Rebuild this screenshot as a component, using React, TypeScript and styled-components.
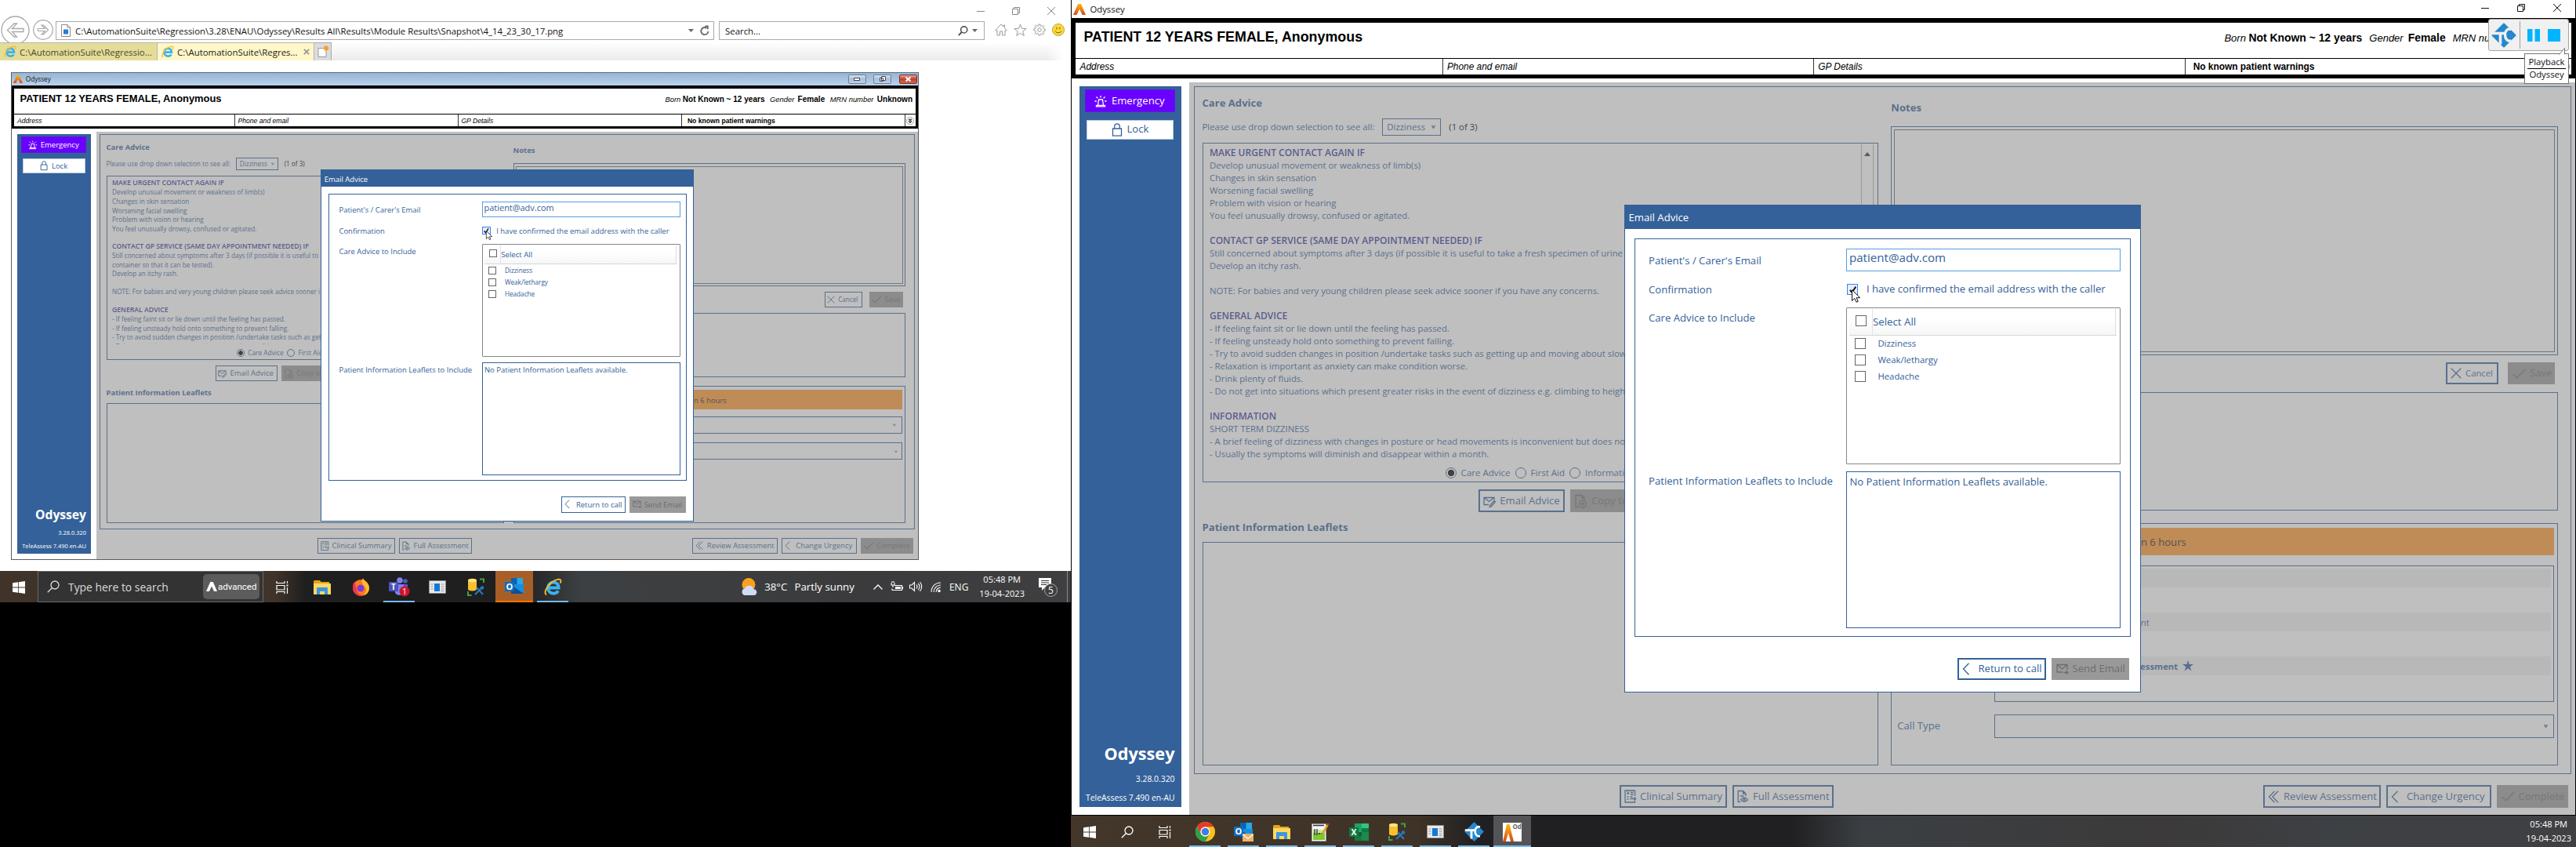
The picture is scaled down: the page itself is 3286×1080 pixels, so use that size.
import React from "react";
import styled, { createGlobalStyle, ThemeProvider, css } from "styled-components";

type Themed = { theme: any };
/* Odyssey measures are written at full size and scaled by the theme's unit. */
const u = (n: number) => ({ theme }: Themed) => `${+(n * theme.u).toFixed(3)}px`;

const BLUE = "#346199";
const SANS = `"Open Sans", "Noto Sans", sans-serif`;
const ARIAL = `"Liberation Sans", Arial, sans-serif`;

const GlobalStyle = createGlobalStyle`
  *, *::before, *::after { box-sizing: border-box; }
  body { margin: 0; background: #000; font-family: ${SANS}; overflow: hidden; }
  svg { display: block; flex: none; overflow: visible; }
`;

/* ---------- desktops ---------- */
const Desktops = styled.div`
  display: grid;
  grid-template-columns: 1366px 1920px;
  width: 3286px;
  height: 1080px;
  overflow: hidden;
  background: #000;
`;
const LeftDesktop = styled.div`
  display: grid;
  grid-template-rows: 728px 40px;
  height: 768px;
  background: #fff;
`;
const RightDesktop = styled.div`
  display: grid;
  grid-template-rows: 1040px 40px;
  position: relative;
`;

/* ---------- browser ---------- */
const Browser = styled.div`
  display: grid;
  grid-template-rows: 27px 27px 23px minmax(0, 1fr);
  min-width: 0;
`;
const CaptionBar = styled.div`
  display: flex;
  justify-content: flex-end;
  align-items: flex-start;
  gap: 35px;
  padding: 9px 20px 0 0;
  color: #888;
`;
const AddressRow = styled.div`
  display: flex;
  align-items: flex-start;
  color: #111;
  font-size: 11.4px;
`;
const NavButtons = styled.div`
  display: flex;
  align-items: center;
  gap: 4px;
  width: 71px;
  height: 34px;
  margin-top: -6px;
  padding-left: 1px;
  color: #a9a9a9;
`;
const AddressBox = styled.div`
  display: flex;
  align-items: center;
  width: 840px;
  height: 24px;
  padding: 0 5px 0 6px;
  border: 1px solid #a9a9a9;
  background: #fff;
  white-space: nowrap;
`;
const AddressText = styled.span`
  flex: 1;
  margin-left: 6px;
`;
const SearchBox = styled(AddressBox)`
  width: 339px;
  margin-left: 6px;
  padding: 0 8px 0 7px;
`;
const SearchText = styled.span`
  flex: 1;
`;
const Spacer = styled.span<{ $w: number }>`
  flex: none;
  width: ${(p) => p.$w}px;
`;
const ToolIcons = styled.div`
  display: flex;
  align-items: center;
  gap: 8px;
  height: 22px;
  margin-left: 13px;
  color: #999;
`;
const TabStrip = styled.div`
  display: flex;
  background: linear-gradient(90deg, transparent 1335px, #fff 1356px), linear-gradient(#fff, #ebebeb);
`;
const Tab = styled.div<{ $active?: boolean }>`
  display: flex;
  align-items: center;
  width: ${(p) => (p.$active ? 200 : 201)}px;
  padding: 0 5px;
  border: 1px solid #b5b5b5;
  border-width: 1px 1px 0 0;
  background: ${(p) => (p.$active ? "#fff7c8" : "#e5dc98")};
  color: ${(p) => (p.$active ? "#222" : "#4a4733")};
  font-size: 11.45px;
  white-space: nowrap;
`;
const TabText = styled.span`
  flex: 1;
  margin-left: 4px;
`;
const NewTab = styled.div`
  display: flex;
  align-items: center;
  justify-content: center;
  width: 22px;
  border: 1px solid #a9a9a9;
  border-width: 1px 1px 0 0;
  background: #dcdcdc;
`;
const PictureArea = styled.div`
  padding: 15px 0 0 14px;
`;

/* ---------- Odyssey window ---------- */
const Win = styled.div<{ $w: number; $h: number; $line: string }>`
  display: grid;
  grid-template-rows: ${u(23)} ${u(77)} minmax(0, 1fr);
  width: ${(p) => p.$w}px;
  height: ${(p) => p.$h}px;
  border: 1px solid ${(p) => p.$line};
  border-top: 0;
  background: #fff;
  color: ${BLUE};
  font-size: ${u(13.15)};
  line-height: 1.2;
  white-space: nowrap;
`;
const TitleBar = styled.div<{ $aero?: boolean }>`
  display: flex;
  align-items: center;
  gap: ${u(6)};
  padding: ${u(1.5)} ${u(18)} 0 ${u(1.5)};
  color: #111;
  font-size: ${u(11.3)};
  ${(p) =>
    p.$aero &&
    css`
      padding: 0 1px 0 1.5px;
      border-top: 1px solid #5b6f86;
      background: linear-gradient(#98b4d2, #b9d3ee);
      font-size: 8.2px;
    `}
`;
const TitleName = styled.span`
  flex: 1;
`;
const CaptionIcons = styled.div`
  display: flex;
  gap: ${u(36)};
  margin-top: -4px;
`;
const AeroButton = styled.div<{ $close?: boolean }>`
  display: flex;
  align-items: center;
  justify-content: center;
  width: 23px;
  height: 12.5px;
  margin-left: -4px;
  border: 1px solid ${(p) => (p.$close ? "#7a3030" : "#6d8199")};
  border-radius: 2px;
  background: ${(p) =>
    p.$close ? "linear-gradient(#e0a79c, #c0402a 50%, #cf6a50)" : "linear-gradient(#d3e1f0, #a9c0d8 50%, #bdd2e8)"};
`;

const Header = styled.div`
  display: grid;
  grid-template-rows: ${u(45)} minmax(0, 1fr);
  overflow: hidden;
  border: solid #000;
  border-width: ${u(6)} ${u(5)} ${u(5)} ${u(5)};
  color: #000;
  font-family: ${ARIAL};
`;
const PatientRow = styled.div`
  display: flex;
  align-items: baseline;
  padding: ${u(8)} ${u(5.5)} 0 ${u(10.5)};
`;
const PatientName = styled.div`
  flex: 1;
  font-size: ${u(17.88)};
  font-weight: bold;
`;
const Fact = styled.span<{ $gap?: number }>`
  margin-left: ${u(9)};
  font-size: ${u(13)};
  font-style: italic;
  b {
    margin-left: ${(p) => u(p.$gap ?? 6)(p as any)};
    font-size: ${u(13.92)};
    font-style: normal;
  }
`;
const DetailRow = styled.div`
  display: grid;
  grid-template-columns: repeat(4, 1fr) ${u(20)};
  margin-left: ${u(-5.5)};
  border-top: 1px solid #000;
`;
const Detail = styled.div<{ $bold?: boolean; $first?: boolean }>`
  display: flex;
  align-items: center;
  padding-left: ${(p) => u(p.$first ? 11 : p.$bold ? 10 : 5)(p as any)};
  border-left: ${(p) => (p.$first ? 0 : 1)}px solid #333;
  font-size: ${u(11.92)};
  font-weight: ${(p) => (p.$bold ? "bold" : "normal")};
  font-style: ${(p) => (p.$bold ? "normal" : "italic")};
`;
const ExpandCell = styled.div`
  display: flex;
  align-items: center;
  justify-content: center;
  border-left: 1px solid #333;
`;

const Body = styled.div`
  display: grid;
  grid-template-columns: ${u(150)} minmax(0, 1fr);
  grid-template-rows: minmax(0, 1fr);
  min-height: 0;
`;
const Sidebar = styled.div`
  display: flex;
  flex-direction: column;
  margin: ${u(10)};
  padding: ${u(4)} ${u(8.5)} ${u(0.5)} ${u(7)};
  background: ${BLUE};
  color: #fff;
`;
const SideButton = styled.div<{ $kind: "alert" | "lock" }>`
  display: flex;
  align-items: center;
  justify-content: center;
  gap: ${u(6)};
  flex: none;
  ${(p) =>
    p.$kind === "alert"
      ? css`
          height: ${u(29)};
          padding-right: ${u(1)};
          border: 1px solid #5a1cd8;
          background: #6a00ff;
          color: #fff;
        `
      : css`
          height: ${u(25.5)};
          margin: ${u(9.5)} ${u(1.5)} 0 ${u(2)};
          border: 1px solid #b9c9de;
          background: #fff;
          color: ${BLUE};
        `}
`;
const Brand = styled.div`
  display: flex;
  flex-direction: column;
  align-items: flex-end;
  margin-top: auto;
  font-size: ${u(10.36)};
  line-height: ${u(24)};
`;
const BrandName = styled.div`
  margin-bottom: ${u(3.5)};
  font-size: ${u(21.68)};
  font-weight: bold;
  line-height: ${u(32)};
`;

const Main = styled.div`
  position: relative;
  display: grid;
  grid-template-rows: minmax(0, 1fr) ${u(52)};
  margin-top: ${u(5)};
  background: #fff;
`;
const Frame = styled.div`
  display: grid;
  grid-template-columns: minmax(0, 863fr) minmax(0, 851fr);
  grid-template-rows: minmax(0, 1fr);
  column-gap: ${u(16)};
  margin: ${u(5)} ${u(5)} 0 ${u(5.5)};
  padding: 0 ${u(16)} 0 ${u(10)};
  border: 1px solid ${BLUE};
`;
const Column = styled.div<{ $rows: string }>`
  display: grid;
  grid-template-rows: ${(p) => p.$rows};
  min-width: 0;
  min-height: 0;
`;
const Heading = styled.div<{ $top?: number }>`
  padding-top: ${(p) => u(p.$top ?? 0)(p as any)};
  font-size: ${u(13.1)};
  font-weight: bold;
`;
const Picker = styled.div`
  display: flex;
  align-items: center;
  gap: ${u(10)};
  padding-bottom: ${u(9)};
  font-size: ${u(11.36)};
`;
const Combo = styled.div<{ $w?: number; $h: number }>`
  display: flex;
  align-items: center;
  justify-content: space-between;
  width: ${(p) => (p.$w ? u(p.$w)(p as any) : "auto")};
  height: ${(p) => u(p.$h)(p as any)};
  padding: 0 ${u(6)} 0 ${u(5)};
  border: 1px solid ${BLUE};
`;
const Count = styled.span`
  color: #000;
`;
const Box = styled.div<{ $pale?: boolean }>`
  border: ${(p) => (p.$pale ? "1px solid #6c6c6c" : `1px solid ${BLUE}`)};
  min-height: 0;
`;
const CareBox = styled(Box)`
  display: grid;
  grid-template-rows: minmax(0, 1fr) ${u(25)};
  padding: 1px;
`;
const CareScroll = styled.div`
  display: grid;
  grid-template-columns: minmax(0, 1fr) ${u(16)};
  grid-template-rows: minmax(0, 1fr);
  min-height: 0;
  padding-right: ${u(4)};
  overflow: hidden;
`;
const CareText = styled.div`
  padding: ${u(3)} 0 0 ${u(7.5)};
  overflow: hidden;
  font-size: ${u(11.34)};
  line-height: ${u(16)};
`;
const CareLine = styled.div<{ $head?: boolean }>`
  height: ${u(16)};
  ${(p) =>
    p.$head &&
    css`
      color: #3737a0;
      font-size: ${u(12.05)};
      font-weight: 600;
    `}
`;
const Scrollbar = styled.div`
  border: 1px solid #b5b5b5;
  border-width: 0 1px;
  padding: ${u(10)} ${u(3)};
`;
const Radios = styled.div`
  display: flex;
  align-items: center;
  justify-content: center;
  gap: ${u(6)};
  padding-top: ${u(5.5)};
  font-size: ${u(11.55)};
`;
const Dot = styled.span<{ $on?: boolean }>`
  width: ${u(14)};
  height: ${u(14)};
  border: ${u(1.6)} solid ${BLUE};
  border-radius: 50%;
  background: ${(p) => (p.$on ? "radial-gradient(circle, #000 0 44%, #fff 54%)" : "none")};
`;
const ButtonRow = styled.div`
  display: flex;
  justify-content: flex-end;
  gap: ${u(7)};
  align-items: flex-start;
`;
const Between = styled.div`
  padding-top: ${u(9.5)};
  min-height: 0;
`;
const Button = styled.div<{ $w: number; $off?: boolean; $small?: boolean }>`
  display: flex;
  align-items: center;
  gap: ${u(5)};
  flex: none;
  width: ${(p) => u(p.$w)(p as any)};
  height: ${u(28.7)};
  padding-left: ${u(4)};
  border: ${u(2)} solid ${(p) => (p.$off ? "#999" : BLUE)};
  background: ${(p) => (p.$off ? "#999" : "transparent")};
  color: ${(p) => (p.$off ? "#6e6e6e" : BLUE)};
  font-size: ${(p) => u(p.$small ? 11.32 : 13.1)(p as any)};
  overflow: hidden;
`;
const NotesBox = styled(Box)`
  display: grid;
  padding: ${u(3)};
`;
const NoteButtons = styled(ButtonRow)`
  gap: ${u(12)};
  padding: ${u(9)} ${u(4)} 0 0;
`;
const OutcomeBox = styled(Box)`
  display: flex;
  flex-direction: column;
  padding: ${u(5.5)} ${u(4.5)} 0;
`;
const Banner = styled.div`
  display: flex;
  align-items: center;
  flex: none;
  height: ${u(34.5)};
  padding-top: ${u(2)};
  background: #ff9931;
  color: #222;
  font-size: ${u(13.1)};
`;
const FixedEnd = styled.span<{ $w: number; $bold?: boolean }>`
  width: ${(p) => u(p.$w)(p as any)};
  text-align: right;
  font-weight: ${(p) => (p.$bold ? "bold" : "normal")};
`;
const Field = styled.div<{ $gap: number }>`
  display: grid;
  grid-template-columns: ${u(126)} 1fr;
  align-items: center;
  flex: none;
  margin-top: ${(p) => u(p.$gap)(p as any)};
`;
const FieldLabel = styled.span`
  padding-left: ${u(2.5)};
`;
const Outcomes = styled.div`
  display: flex;
  flex-direction: column;
  gap: ${u(4)};
  height: ${u(174)};
  padding: ${u(3)};
  border: 1px solid ${BLUE};
  font-size: ${u(11.34)};
`;
const Outcome = styled.div<{ $shade?: boolean }>`
  display: flex;
  align-items: center;
  gap: ${u(6)};
  flex: none;
  height: ${u(24)};
  padding-top: ${u(1)};
  background: ${(p) => (p.$shade ? "#f1f1f1" : "none")};
`;
const Footer = styled.div`
  display: grid;
  grid-template-columns: 1fr 1fr;
  padding-top: ${u(14.2)};
`;
const FooterLeft = styled(ButtonRow)`
  padding-right: ${u(62)};
`;
const FooterRight = styled(ButtonRow)`
  padding-right: ${u(9)};
`;

/* ---------- dialog ---------- */
const Overlay = styled.div`
  position: absolute;
  inset: 0;
  display: flex;
  align-items: center;
  justify-content: center;
  background: rgba(127, 127, 127, 0.5);
`;
const Dialog = styled.div`
  display: grid;
  grid-template-rows: ${u(29.5)} minmax(0, 1fr) ${u(70)};
  width: ${u(659)};
  height: ${u(621.5)};
  border: 1px solid ${BLUE};
  background: #fff;
`;
const DialogTitle = styled.div`
  display: flex;
  align-items: center;
  padding: ${u(2)} 0 0 ${u(5)};
  background: ${BLUE};
  color: #fff;
`;
const DialogFrame = styled.div`
  display: grid;
  grid-template-columns: ${u(252.4)} ${u(350)};
  grid-template-rows: ${u(29)} ${u(46.5)} ${u(199.5)} ${u(200)};
  align-content: start;
  margin: ${u(12)} ${u(12)} 0 ${u(12)};
  padding: ${u(12)} 0 0 ${u(17.5)};
  border: 1px solid ${BLUE};
`;
const Label = styled.div<{ $top: number }>`
  padding-top: ${(p) => u(p.$top)(p as any)};
`;
const EmailInput = styled.div`
  padding: ${u(2.5)} 0 0 ${u(2.5)};
  border: 1px solid #569de5;
  font-size: ${u(15.15)};
  line-height: 1.15;
`;
const Confirm = styled.div`
  position: relative;
  display: flex;
  align-items: center;
  gap: ${u(10.5)};
  padding: 0 0 0 ${u(1)};
`;
const Check = styled.span<{ $on?: boolean }>`
  display: flex;
  align-items: center;
  justify-content: center;
  flex: none;
  width: ${u(14)};
  height: ${u(14)};
  border: 1px solid ${(p) => (p.$on ? "#3f82f5" : "#666")};
  background: ${(p) => (p.$on ? "#e4effd" : "#fff")};
`;
const Pointer = styled.div`
  position: absolute;
  left: ${u(7)};
  top: ${u(23)};
`;
const AdviceList = styled.div`
  border: 1px solid #82868f;
  border-radius: 1px;
  padding: ${u(1)} ${u(3)};
  font-size: ${u(11.35)};
`;
const ListHead = styled.div`
  display: flex;
  align-items: center;
  height: ${u(33.5)};
  border-bottom: 1px solid #d5d5d5;
  border-right: ${u(2.5)} solid #fff;
  background: linear-gradient(#fff 40%, #f5f6f7);
  font-size: ${u(13.3)};
`;
const HeadCheck = styled.div`
  display: flex;
  align-items: center;
  width: ${u(29.5)};
  height: 100%;
  padding: 0 0 ${u(3)} ${u(8)};
  border-right: 1px solid #e3e3e3;
`;
const HeadText = styled.div`
  display: flex;
  align-items: center;
  flex: 1;
  height: 100%;
  border-right: 1px solid #dcdcdc;
`;
const ListItem = styled.div`
  display: flex;
  align-items: center;
  gap: ${u(15)};
  height: ${u(21)};
  padding-left: ${u(7)};
`;
const Leaflets = styled(Box)`
  margin-top: ${u(9)};
  height: ${u(200)};
  padding: ${u(5)} ${u(3)};
`;
const DialogButtons = styled(ButtonRow)`
  padding: ${u(27)} ${u(13.5)} 0 0;
`;

/* ---------- taskbars ---------- */
const Taskbar = styled.div<{ $bg: string }>`
  display: flex;
  align-items: center;
  color: #fff;
  background: ${(p) => p.$bg};
  white-space: nowrap;
`;
const Slot = styled.div<{ $w: number; $open?: string; $bg?: string; $gap?: number }>`
  display: flex;
  align-items: center;
  justify-content: center;
  flex: none;
  width: ${(p) => p.$w}px;
  height: 40px;
  margin-right: ${(p) => p.$gap ?? 0}px;
  padding-top: 1px;
  background: ${(p) => p.$bg ?? "none"};
  box-shadow: ${(p) => (p.$open ? `inset 0 -2px ${p.$open}` : "none")};
`;
const TaskSearch = styled.div`
  display: flex;
  align-items: center;
  width: 288px;
  height: 40px;
  padding: 0 4px 0 11px;
  border: 1px solid #6a6a6a;
  background: #333;
  color: #dcdcdc;
  font-size: 13.9px;
`;
const TaskSearchText = styled.span`
  flex: 1;
  margin-left: 11px;
`;
const SearchBrand = styled.div`
  display: flex;
  align-items: center;
  gap: 1px;
  width: 72px;
  height: 32px;
  padding-left: 4px;
  border-radius: 5px;
  background: #5c5c5c;
  color: #fff;
  font: 11.5px Roboto, ${SANS};
`;
const Tray = styled.div`
  display: flex;
  align-items: center;
  margin-left: auto;
  font-size: 13.3px;
`;
const TrayItem = styled.div<{ $left?: number; $size?: number }>`
  flex: none;
  margin-left: ${(p) => p.$left ?? 0}px;
  font-size: ${(p) => p.$size ?? 13.3}px;
`;
const Clock = styled.div<{ $left?: number; $right?: number }>`
  margin: 0 ${(p) => p.$right ?? 0}px 0 ${(p) => p.$left ?? 0}px;
  font-size: 11.05px;
  line-height: 18px;
  text-align: center;
`;
const PeekEdge = styled.div`
  width: 5px;
  height: 40px;
  border-left: 1px solid #8a8a8a;
`;

/* ---------- playback overlay ---------- */
const Playback = styled.div`
  position: absolute;
  top: 24px;
  right: 9px;
  display: flex;
  flex-direction: column;
  align-items: flex-end;
`;
const PlaybackBar = styled.div`
  display: flex;
  align-items: center;
  width: 103px;
  height: 41px;
  padding: 0 3px;
  border: 1px solid #a8a49f;
  border-radius: 3px;
  background: #f0f0f0;
`;
const PlaybackRule = styled.span`
  width: 1px;
  height: 35px;
  margin: 0 9px 0 4px;
  background: #9c9c9c;
`;
const PlaybackTip = styled.div`
  position: relative;
  width: 57px;
  height: 39px;
  margin-top: 3px;
  padding: 2px 3px;
  border: 1px solid #767676;
  background: #fff;
  color: #111;
  font-size: 11.3px;
  line-height: 16px;
  text-align: center;
`;
const TipLine = styled.div<{ $ruled?: boolean }>`
  ${(p) => p.$ruled && "border-top: 1px solid #000; line-height: 14px;"}
`;
const TipPoint = styled.div`
  position: absolute;
  right: 4px;
  top: -8px;
`;

/* ---------- icons ---------- */
type IconProps = { w: number; h?: number; vb?: string; sw?: number; children: React.ReactNode };
const Svg = ({ w, h, vb, sw = 1, children }: IconProps) => (
  <svg width={w} height={h ?? w} viewBox={vb ?? `0 0 ${w} ${h ?? w}`} fill="none" stroke="currentColor" strokeWidth={sw}>
    {children}
  </svg>
);
const SizedSvg = styled.svg<{ $w: number; $h: number }>`
  width: ${(p) => u(p.$w)(p as any)};
  height: ${(p) => u(p.$h)(p as any)};
  fill: none;
  stroke: currentColor;
`;
const glyphs: Record<string, [number, number, React.ReactNode]> = {
  siren: [16, 16, <g strokeWidth="1.3"><path d="M4.5 13.5 5.5 6h5l1 7.5M2.5 14.8h11v-1.5h-11zM8 1v2.5M2.5 2.5l1.8 1.8M13.5 2.5l-1.8 1.8M.5 8h2.3M13.2 8h2.3" /></g>],
  lock: [14, 17, <g strokeWidth="1.3"><path d="M1.5 7h11v9.2h-11zM3.7 7V4.2a3.3 3.3 0 0 1 6.6 0V7" /></g>],
  mailEdit: [16, 14, <g strokeWidth="1.3"><path d="M7 11.5H1v-9h13v3M1 2.5l6.5 5 6.5-5M8.5 12.500l5.500-6 1.500 1.300-5.300 6-2 .5z" /></g>],
  mailSend: [16, 14, <g strokeWidth="1.3"><path d="M8 11H1V1.500h13V8M1 1.500l6.500 5.500L14 1.500M9 11.500h6M12.800 9.300l2.200 2.200-2.200 2.200" /></g>],
  copy: [16, 18, <g strokeWidth="1.3"><path d="M5 16.500H1v-15h8l3.500 3.500v2M9 1.500V5h3.500" /><circle cx="10" cy="12.500" r="4.500" /><path d="M10 10v5M7.500 12.500h5" /></g>],
  summary: [15, 17, <g strokeWidth="1.3"><path d="M13.500 8V1H1v15h12.500v-2M3.500 5.800l1.300-2.600 1.300 2.600M8 3.500h3.500M8 6h3.500M3.500 9h2M7.500 9h3M3.500 12h2M7.500 11.500h7M12.500 9.500l2.200 2-2.200 2" /></g>],
  docEye: [15, 17, <g strokeWidth="1.3"><path d="M4 15.500H1.200v-14h6.300L11 5v3M7.500 1.500V5H11M3.500 8h5" /><path d="M4.500 12.800c2.500-3.500 6.500-3.500 9 0-2.500 3.500-6.500 3.500-9 0z" /><circle cx="9" cy="12.800" r="1.300" /></g>],
  back: [10, 16, <path strokeWidth="1.300" d="M8.500.8 1.500 8l7 7.200" />],
  back2: [14, 16, <path strokeWidth="1.300" d="M8.500.8 1.500 8l7 7.200M13 .8 6 8l7 7.200" />],
  cross: [14, 14, <path strokeWidth="1.300" d="m.8.8 12.400 12.400M13.200.8.800 13.200" />],
  tick: [17, 13, <path strokeWidth="1.400" d="m.8 7 4.700 5L16.200.8" />],
  down: [5, 5, <path strokeWidth="1.300" d="M.5.8 2.500 4.200 4.500.8" />],
  star: [14, 14, <path stroke="none" fill="currentColor" d="m7 0 1.700 5H14L9.700 8.200 11.400 13.500 7 10.300l-4.400 3.200L4.300 8.200 0 5h5.300z" />],
  check: [9, 9, <path stroke="#111" strokeWidth="1.900" d="M.8 4.800 3.500 7.800 8.300.6" />],
  pointer: [12, 17, <path fill="#fff" stroke="#111" strokeWidth="1" d="M.5.5v14l3.400-3 2.200 4.800 2.200-1-2.200-4.600h4.500z" />],
  arrowUp: [8, 5, <path stroke="none" fill="#333" d="M4 0 8 5H0z" />],
  expand: [14, 14, <g><circle cx="7" cy="7" r="6.600" fill="#eee" stroke="#999" /><path stroke="#000" strokeWidth="1.400" d="M4.500 3.800 7 6.200l2.500-2.400M4.500 7.500 7 9.900l2.500-2.400" /></g>],
};
const Glyph = ({ name, pad }: { name: string; pad?: number }) => {
  const [w, h, body] = glyphs[name];
  return (
    <SizedSvg $w={w + (pad ?? 0)} $h={h} viewBox={`0 0 ${w + (pad ?? 0)} ${h}`}>
      {body}
    </SizedSvg>
  );
};

const AMark = ({ w, h, light }: { w: number; h: number; light?: boolean }) => (
  <svg width={w} height={h} viewBox="0 0 16 14" preserveAspectRatio="none">
    <defs>
      <linearGradient id="flame" x1="0" y1="0" x2="0" y2="1">
        <stop offset="0" stopColor="#f9b914" />
        <stop offset="1" stopColor="#d9481c" />
      </linearGradient>
    </defs>
    <path fill={light ? "#fff" : "url(#flame)"} d="M6 0h4l6 14h-4.500L8 6.500 4.500 14H0z" />
  </svg>
);
const WindowsLogo = () => (
  <svg width="16" height="16" viewBox="0 0 16 16" fill="#fff">
    <path d="M0 2.300 7 1.300V7.600H0zM7.800 1.200 16 0v7.600H7.800zM0 8.400h7v6.300l-7-1zM7.800 8.400H16V16l-8.200-1.200z" />
  </svg>
);
const Magnifier = ({ s = 16 }: { s?: number }) => (
  <Svg w={s} vb="0 0 16 16" sw={1.3}>
    <circle cx="10" cy="6" r="5" />
    <path d="M6.500 9.500.8 15.300" />
  </Svg>
);
const TaskView = () => (
  <Svg w={16} vb="0 0 16 16" sw={1.2}>
    <path d="M1 0v2.500h10V0M1 5.500h10v5.500H1zM1 16v-2.500h10V16M14.500 0v3M14.500 8v8" />
    <path d="M13.500 4.500h2v2h-2z" fill="currentColor" stroke="none" />
  </Svg>
);
const Folder = () => (
  <svg width="22" height="18" viewBox="0 0 22 18">
    <path fill="#e8a317" d="M0 1.500Q0 0 1.500 0H8l1.500 2H20v4H0z" />
    <path fill="#ffd863" d="M0 4h22v14H0z" />
    <path fill="#3b97dd" d="M4 10q0-1 1-1h12q1 0 1 1v8h-4v-4H8v4H4z" />
  </svg>
);
const Firefox = () => (
  <svg width="23" height="23" viewBox="0 0 23 23">
    <circle cx="11.500" cy="12.500" r="10.500" fill="#ff7a1a" />
    <path fill="#ffbd2e" d="M14 0c1 4 8 6 8 13a10 10 0 0 1-7 9c5-6 3-10 0-12-2-3-3-6-1-10z" />
    <path fill="#f0334e" d="M1 12a10.500 10.500 0 0 0 14 10.500C8 22 6 18 6 14 4 10 5 7 3 5c-2 2-2 5-2 7z" />
    <circle cx="11" cy="13" r="4.500" fill="#7b3bd6" />
  </svg>
);
const Teams = () => (
  <svg width="26" height="25" viewBox="0 0 26 25">
    <circle cx="14" cy="4" r="3.800" fill="#7b83eb" />
    <circle cx="21" cy="5" r="2.800" fill="#5059c9" />
    <path fill="#5059c9" d="M16 9h8v7a5 5 0 0 1-6 4z" />
    <path fill="#7b83eb" d="M8 9h11v9a6 6 0 0 1-11 2z" />
    <rect x="0" y="6" width="12" height="12" rx="1" fill="#4b53bc" />
    <text x="6" y="15.500" fontSize="10" fontWeight="bold" fontFamily="Open Sans, sans-serif" fill="#fff" textAnchor="middle">T</text>
    <circle cx="20" cy="18" r="6.500" fill="#d0142c" />
    <text x="20" y="22" fontSize="10.500" fontFamily="Open Sans, sans-serif" fill="#fff" textAnchor="middle">1</text>
  </svg>
);
const PanelIcon = () => (
  <svg width="22" height="17" viewBox="0 0 22 17">
    <path fill="#e9e9e9" stroke="#8a8a8a" d="M.5.5h21v16H.5z" />
    <path fill="#0f7ad8" d="M7 4h7v10H7z" />
    <path stroke="#999" d="M2.500 5h3M2.500 8h3M2.500 11h3M15.500 5h4M15.500 8h4M15.500 11h4M15.500 13.500h4" />
  </svg>
);
const DbTools = () => (
  <svg width="22" height="23" viewBox="0 0 22 23">
    <path fill="#f6c12c" d="M1 3q5.500-4 11 0v12q-5.500 3-11 0z" />
    <ellipse cx="6.500" cy="3" rx="5.500" ry="2.300" fill="#ffe27a" />
    <path fill="none" stroke="#3fa04a" strokeWidth="2" d="M16 1.500h5V6M1 17v5h4.500" />
    <path stroke="#2677bd" strokeWidth="2.200" d="m10 21 9-9M12 12l8 9" />
    <circle cx="19" cy="12.500" r="2.300" fill="#2677bd" />
  </svg>
);
const Outlook = ({ envelope }: { envelope?: boolean }) => (
  <svg width="25" height="25" viewBox="0 0 25 25">
    <path fill="#28a8ea" d="M8 1h15v9H8z" />
    <path fill="#0a63b5" d="M8 1h7.500v9H8z" />
    <path fill="#1490df" d="M8 9h16v12H8z" />
    <path fill="#0a4f96" d="m8 10 16 11H8z" />
    <path fill="#0f6cbd" d="M0 6h12v12H0z" />
    <text x="6" y="16" fontSize="11" fontWeight="bold" fontFamily="Open Sans, sans-serif" fill="#fff" textAnchor="middle">O</text>
    {envelope && <path fill="#e9b26a" d="M11 15h14v10H11z" />}
    {envelope && <path fill="none" stroke="#fff" strokeWidth="1.200" d="m11.500 16 6.500 5.500 6.500-5.500" />}
  </svg>
);
const IeMark = ({ s }: { s: number }) => (
  <svg width={s} height={s} viewBox="0 0 22 22">
    <path fill="none" stroke="#3db3ec" strokeWidth="3.800" d="M4.500 12h13.300c0-4-2.500-6.800-6.300-6.800s-6.700 3-6.700 7 2.900 6.600 6.700 6.600c2.600 0 4.600-1 5.700-3.100" />
    <path fill="none" stroke="#f3bd2b" strokeWidth="1.800" d="M3 20.500C-1 19 3 10 9 5.500 14 1.500 20 .5 20.500 3c.2 1.200-.3 2.500-1 3.500" />
  </svg>
);
const ChromeMark = () => (
  <svg width="25" height="25" viewBox="0 0 24 24">
    <circle cx="12" cy="12" r="12" fill="#fbc116" />
    <path fill="#e33b2e" d="M1.600 6A12 12 0 0 1 22.400 6H12a6 6 0 0 0-5.200 9z" />
    <path fill="#2ba24c" d="M1.600 6A12 12 0 0 0 12 24l5.200-9A6 6 0 0 1 6.800 15z" />
    <circle cx="12" cy="12" r="5.800" fill="#fff" />
    <circle cx="12" cy="12" r="4.600" fill="#3f7de8" />
  </svg>
);
const Notepad = () => (
  <svg width="22" height="24" viewBox="0 0 22 24">
    <path fill="#f6f6f6" stroke="#999" d="M.5 1.500h18v22H.5z" />
    <path fill="#7dc832" d="M2 12h15v10H2z" />
    <path fill="#c5e89a" d="M2 9h15v4H2z" />
    <path stroke="#333" strokeWidth="1.300" d="M4 8v8M7 8v8M9 14h2M12 14h2M2 3.500h14" />
    <path stroke="#e0a020" strokeWidth="2.500" d="m20.500 3-7 12" />
    <path stroke="#c33" strokeWidth="2.500" d="m21.500 1-1 2" />
  </svg>
);
const Excel = () => (
  <svg width="25" height="22" viewBox="0 0 25 22">
    <path fill="#21a366" d="M7 0h9v11H7z" />
    <path fill="#33c481" d="M16 0h9v6h-9z" />
    <path fill="#107c41" d="M16 6h9v5h-9zM7 11h9v11H7z" />
    <path fill="#185c37" d="M7 11h9v5H7z" />
    <path fill="#1a8a50" d="M16 11h9v11h-9z" />
    <path fill="#0f7a3f" d="M0 5h12v12H0z" />
    <text x="6" y="15" fontSize="10.500" fontWeight="bold" fontFamily="Open Sans, sans-serif" fill="#fff" textAnchor="middle">X</text>
  </svg>
);
/* Rounded diamond with a "t" cut from its left side and a crescent from its right. */
const TcMark = ({ s, bg }: { s: number; bg: string }) => (
  <svg width={s} height={s} viewBox="0 0 32 32">
    <path fill="#2388cf" stroke="#2388cf" strokeWidth="2" strokeLinejoin="round" d="M16 1.500 30.500 16 16 30.500 1.500 16z" />
    <path fill="none" stroke={bg} strokeWidth="3.600" d="M1 13.500h16M11.500 14v13.500" />
    <path fill="none" stroke={bg} strokeWidth="3.400" d="M25.500 8.500c-5-2-8 2-8 7s3 9 8 7.500" />
  </svg>
);
const RunningApp = () => (
  <svg width="24" height="24" viewBox="0 0 24 24">
    <path fill="#fff" d="M0 0h24v24H0z" />
    <path fill="url(#flame)" d="M5 2h3.500L14 24h-4L7 13 3.800 24H0z" />
    <text x="12.500" y="8" fontSize="8" fontWeight="bold" fontFamily="Open Sans, sans-serif" fill="#666">Od</text>
  </svg>
);
const Weather = () => (
  <svg width="22" height="22" viewBox="0 0 22 22">
    <circle cx="10" cy="8.500" r="8.500" fill="#f9a01f" />
    <path fill="#cfdcf6" d="M5.500 22a4.300 4.300 0 0 1-.5-8.500 6 6 0 0 1 11.300.7A4 4 0 0 1 17.500 22z" />
  </svg>
);
const CaptionGlyphs = () => (
  <>
    <Svg w={10}><path d="M0 5.500h10" /></Svg>
    <Svg w={10}><path d="M.5 2.500h7v7h-7zM2.500 2V.500h7v7H8" /></Svg>
    <Svg w={10}><path d="m0 0 10 10M10 0 0 10" /></Svg>
  </>
);

/* ---------- Odyssey ---------- */
type Line = [string, boolean?];
const adviceStart: Line[] = [
  ["MAKE URGENT CONTACT AGAIN IF", true],
  ["Develop unusual movement or weakness of limb(s)"],
  ["Changes in skin sensation"],
  ["Worsening facial swelling"],
  ["Problem with vision or hearing"],
  ["You feel unusually drowsy, confused or agitated."],
  [""],
  ["CONTACT GP SERVICE (SAME DAY APPOINTMENT NEEDED) IF", true],
];
const specimen: Line[] = [["Still concerned about symptoms after 3 days (if possible it is useful to take a fresh specimen of urine"]];
const specimenWrapped: Line[] = [
  ["Still concerned about symptoms after 3 days (if possible it is useful to"],
  ["container so that it can be tested)."],
];
const adviceEnd: Line[] = [
  ["Develop an itchy rash."],
  [""],
  ["NOTE: For babies and very young children please seek advice sooner if you have any concerns."],
  [""],
  ["GENERAL ADVICE", true],
  ["- If feeling faint sit or lie down until the feeling has passed."],
  ["- If feeling unsteady hold onto something to prevent falling."],
  ["- Try to avoid sudden changes in position /undertake tasks such as getting up and moving about slowly."],
  ["- Relaxation is important as anxiety can make condition worse."],
];
const adviceRest: Line[] = [
  ["- Drink plenty of fluids."],
  ["- Do not get into situations which present greater risks in the event of dizziness e.g. climbing to heights."],
  [""],
  ["INFORMATION", true],
  ["SHORT TERM DIZZINESS"],
  ["- A brief feeling of dizziness with changes in posture or head movements is inconvenient but does not"],
  ["- Usually the symptoms will diminish and disappear within a month."],
];

function EmailDialog() {
  return (
    <Dialog>
      <DialogTitle>Email Advice</DialogTitle>
      <DialogFrame>
        <Label $top={8}>Patient's / Carer's Email</Label>
        <EmailInput>patient@adv.com</EmailInput>
        <Label $top={16.5}>Confirmation</Label>
        <Confirm>
          <Check $on><Glyph name="check" /></Check>
          I have confirmed the email address with the caller
          <Pointer><Glyph name="pointer" /></Pointer>
        </Confirm>
        <Label $top={5.5}>Care Advice to Include</Label>
        <AdviceList>
          <ListHead>
            <HeadCheck><Check /></HeadCheck>
            <HeadText>Select All</HeadText>
          </ListHead>
          {["Dizziness", "Weak/lethargy", "Headache"].map((name) => (
            <ListItem key={name}><Check />{name}</ListItem>
          ))}
        </AdviceList>
        <Label $top={14.5}>Patient Information Leaflets to Include</Label>
        <Leaflets>No Patient Information Leaflets available.</Leaflets>
      </DialogFrame>
      <DialogButtons>
        <Button $w={113}><Glyph name="back" pad={6} />Return to call</Button>
        <Button $w={99.5} $off><Glyph name="mailSend" />Send Email</Button>
      </DialogButtons>
    </Dialog>
  );
}

type OdysseyProps = {
  width: number;
  height: number;
  aero?: boolean;
  leftRows: [number, number];
  rightRows: [number, number, number];
  advice: Line[];
};
function Odyssey({ width, height, aero, leftRows, rightRows, advice }: OdysseyProps) {
  const k = aero ? 0.7225 : 1;
  const s = (n: number) => `${(n * k).toFixed(2)}px`;
  const fr = (n: number) => `minmax(0, ${n}fr)`;
  const left = `${s(39)} ${s(32)} ${fr(leftRows[0])} ${s(75.7)} ${fr(leftRows[1])} ${s(10)}`;
  const right = `${s(49.7)} ${fr(rightRows[0])} ${s(47)} ${fr(rightRows[1])} ${s(16)} ${fr(rightRows[2])} ${s(10)}`;
  return (
    <ThemeProvider theme={{ u: k }}>
      <Win $w={width} $h={height} $line={aero ? "#5c5c5c" : "#000"}>
        <TitleBar $aero={aero}>
          <AMark w={aero ? 12 : 16} h={aero ? 10 : 14} />
          <TitleName>Odyssey</TitleName>
          {aero ? (
            <>
              <AeroButton><Svg w={8} h={4}><rect x=".5" y=".5" width="7" height="3" fill="#fff" stroke="#445" /></Svg></AeroButton>
              <Spacer $w={5} />
              <AeroButton><Svg w={8} h={8}><path fill="#fff" stroke="#445" d="M2.500.5h5v5h-5zM.5 2.500h4v4h-4z" /></Svg></AeroButton>
              <Spacer $w={5} />
              <AeroButton $close><Svg w={7} h={6} sw={2}><path stroke="#fff" d="m.5.5 6 5M6.500.5l-6 5" /></Svg></AeroButton>
            </>
          ) : (
            <CaptionIcons><CaptionGlyphs /></CaptionIcons>
          )}
        </TitleBar>
        <Header>
          <PatientRow>
            <PatientName>PATIENT 12 YEARS FEMALE, Anonymous</PatientName>
            <Fact $gap={3.5}>Born<b>Not Known ~ 12 years</b></Fact>
            <Fact>Gender<b>Female</b></Fact>
            <Fact>MRN number<b>Unknown</b></Fact>
          </PatientRow>
          <DetailRow>
            <Detail $first>Address</Detail>
            <Detail>Phone and email</Detail>
            <Detail>GP Details</Detail>
            <Detail $bold>No known patient warnings</Detail>
            <ExpandCell><Glyph name="expand" /></ExpandCell>
          </DetailRow>
        </Header>
        <Body>
          <Sidebar>
            <SideButton $kind="alert"><Glyph name="siren" />Emergency</SideButton>
            <SideButton $kind="lock"><Glyph name="lock" />Lock</SideButton>
            <Brand>
              <BrandName>Odyssey</BrandName>
              <div>3.28.0.320</div>
              <div>TeleAssess 7.490 en-AU</div>
            </Brand>
          </Sidebar>
          <Main>
            <Frame>
              <Column $rows={left}>
                <Heading $top={13}>Care Advice</Heading>
                <Picker>
                  Please use drop down selection to see all:
                  <Combo $w={75} $h={22}>Dizziness<Glyph name="down" /></Combo>
                  <Count>(1 of 3)</Count>
                </Picker>
                <CareBox>
                  <CareScroll>
                    <CareText>
                      {advice.map(([text, head], i) => (
                        <CareLine key={i} $head={head}>{text}</CareLine>
                      ))}
                    </CareText>
                    <Scrollbar><Glyph name="arrowUp" /></Scrollbar>
                  </CareScroll>
                  <Radios>
                    <Dot $on />Care Advice<Dot />First Aid<Dot />Information
                  </Radios>
                </CareBox>
                <Between>
                  <ButtonRow>
                    <Button $w={110}><Glyph name="mailEdit" />Email Advice</Button>
                    <Button $w={393} $off><Glyph name="copy" />Copy to</Button>
                  </ButtonRow>
                  <Heading $top={11.5}>Patient Information Leaflets</Heading>
                </Between>
                <Box />
              </Column>
              <Column $rows={right}>
                <Heading $top={19}>Notes</Heading>
                <NotesBox><Box $pale /></NotesBox>
                <NoteButtons>
                  <Button $w={67} $small><Glyph name="cross" />Cancel</Button>
                  <Button $w={60} $off><Glyph name="tick" />Save</Button>
                </NoteButtons>
                <Box />
                <span />
                <OutcomeBox>
                  <Banner><FixedEnd $w={371}>within 6 hours</FixedEnd></Banner>
                  <Field $gap={aero ? 12.5 : 13}>
                    <span />
                    {aero ? (
                      <Combo $h={30}><span /><Glyph name="down" pad={4} /></Combo>
                    ) : (
                      <Outcomes>
                        <Outcome $shade />
                        <Outcome />
                        <Outcome $shade><FixedEnd $w={194}>Appointment</FixedEnd></Outcome>
                        <Outcome />
                        <Outcome $shade><FixedEnd $w={230.5} $bold>Assessment</FixedEnd><Glyph name="star" /></Outcome>
                        <Outcome />
                      </Outcomes>
                    )}
                  </Field>
                  <Field $gap={16}>
                    <FieldLabel>Call Type</FieldLabel>
                    <Combo $h={30}><span /><Glyph name="down" pad={1} /></Combo>
                  </Field>
                </OutcomeBox>
              </Column>
            </Frame>
            <Footer>
              <FooterLeft>
                <Button $w={137}><Glyph name="summary" />Clinical Summary</Button>
                <Button $w={129}><Glyph name="docEye" />Full Assessment</Button>
              </FooterLeft>
              <FooterRight>
                <Button $w={150}><Glyph name="back2" pad={1} />Review Assessment</Button>
                <Button $w={133.5}><Glyph name="back" pad={5} />Change Urgency</Button>
                <Button $w={91.5} $off><Glyph name="tick" />Complete</Button>
              </FooterRight>
            </Footer>
            <Overlay><EmailDialog /></Overlay>
          </Main>
        </Body>
      </Win>
    </ThemeProvider>
  );
}

/* ---------- page ---------- */
const ACTIVE = "#76b9ed";
const LEFT_BAR = "linear-gradient(90deg, #40342a 0 350px, #1f1f20 390px 640px, #2a2b2d 690px, #3d4042 740px, #3b3b3d 1100px, #3f3f41)";
const RIGHT_BAR = "linear-gradient(90deg, #43362a 0, #3f3327 440px, #202022 520px 920px, #3b3f43 1010px, #3c3a3a 1400px, #3d4044 1600px, #404043)";

export default function App() {
  return (
    <>
      <GlobalStyle />
      <Desktops>
        <LeftDesktop>
          <Browser>
            <CaptionBar><CaptionGlyphs /></CaptionBar>
            <AddressRow>
              <NavButtons>
                <Svg w={37} vb="0 0 37 37" sw={1.3}>
                  <circle cx="18.500" cy="18.500" r="17.500" />
                  <path d="M8.500 18.500 17 10h3.500l-6 6.500H29v4H14.500l6 6.500H17z" />
                </Svg>
                <Svg w={26} vb="0 0 26 26" sw={1.2}>
                  <circle cx="13" cy="13" r="12.300" />
                  <path d="M19.500 13 13.500 7H11l4.300 4.500H6.500v3h8.800L11 19h2.500z" />
                </Svg>
              </NavButtons>
              <AddressBox>
                <Svg w={12} h={16}>
                  <path fill="#fff" stroke="#8a8a8a" d="M.5.5h7.500l3.500 3.500v11.500H.5zM8 .5V4h3.500" />
                  <path fill="#2a7bd0" stroke="none" d="M3 6.500h6v6H3z" />
                </Svg>
                <AddressText>C:\AutomationSuite\Regression\3.28\ENAU\Odyssey\Results All\Results\Module Results\Snapshot\4_14_23_30_17.png</AddressText>
                <Svg w={7} h={4}><path fill="#666" stroke="none" d="M0 0h7L3.500 4z" /></Svg>
                <Spacer $w={8} />
                <Svg w={12} h={12} sw={1.8}><path stroke="#666" d="M10.500 7A4.600 4.600 0 1 1 8.500 2.800M6.500.3h3.300v4" /></Svg>
              </AddressBox>
              <SearchBox>
                <SearchText>Search...</SearchText>
                <Svg w={13} h={13} vb="0 0 16 16" sw={2}><circle cx="9.500" cy="6" r="5" stroke="#555" /><path stroke="#555" strokeWidth="2.500" d="M6 9.500 1 15" /></Svg>
                <Spacer $w={5} />
                <Svg w={7} h={4}><path fill="#666" stroke="none" d="M0 0h7L3.500 4z" /></Svg>
              </SearchBox>
              <ToolIcons>
                <Svg w={16}><path d="M8 1 .800 8.500l1 1L3 8.500V15h3.500v-5h3v5H13V8.500l1.200 1 1-1L12.500 5.500V2H11v2z" /></Svg>
                <Svg w={17}><path d="m8.500 1 2 5.300 5.700.2-4.500 3.500 1.600 5.500-4.800-3.200-4.800 3.200L5.300 10 .8 6.500l5.700-.2z" /></Svg>
                <Svg w={16}>
                  <circle cx="8" cy="8" r="2.300" />
                  <path d="M7 1h2l.4 2 1.400.6L12.500 2.400l1.300 1.300-1.200 1.700.6 1.400 2 .4v2l-2 .4-.6 1.400 1.200 1.700-1.300 1.300-1.700-1.200-1.400.6L9 15H7l-.4-2-1.400-.6-1.700 1.200-1.300-1.300 1.200-1.700-.6-1.400-2-.4v-2l2-.4.6-1.400-1.200-1.700 1.300-1.300 1.700 1.200L6.600 3z" />
                </Svg>
                <Svg w={16}>
                  <circle cx="8" cy="8" r="7.500" fill="#ffdb3a" stroke="#b9a04a" />
                  <path stroke="#6b5a1e" d="M6 4.500v3M10 4.500v3M4 9.500c1.500 3 6.500 3 8 0" />
                </Svg>
              </ToolIcons>
            </AddressRow>
            <TabStrip>
              <Tab><IeMark s={16} /><TabText>C:\AutomationSuite\Regressio...</TabText></Tab>
              <Tab $active>
                <IeMark s={16} /><TabText>C:\AutomationSuite\Regres...</TabText>
                <Svg w={8} h={8} sw={1.8}><path stroke="#999" d="m.8.8 6.400 6.400M7.200.8.800 7.200" /></Svg>
              </Tab>
              <NewTab>
                <Svg w={14} h={16}>
                  <path fill="#fff" stroke="#999" d="M1 3.500h10v11H1z" />
                  <path stroke="#f0a020" strokeWidth="1.400" d="M11 0v7M7.500 3.500h7M8.500 1l5 5M13.500 1l-5 5" />
                </Svg>
              </NewTab>
            </TabStrip>
            <PictureArea>
              <Odyssey
                aero
                width={1158}
                height={622}
                leftRows={[235.7, 154]}
                rightRows={[157, 81.7, 175]}
                advice={[...adviceStart, ...specimenWrapped, ...adviceEnd]}
              />
            </PictureArea>
          </Browser>
          <Taskbar $bg={LEFT_BAR}>
            <Slot $w={48}><WindowsLogo /></Slot>
            <TaskSearch>
              <Magnifier />
              <TaskSearchText>Type here to search</TaskSearchText>
              <SearchBrand><AMark w={14} h={12} light />advanced</SearchBrand>
            </TaskSearch>
            <Slot $w={48}><TaskView /></Slot>
            <Slot $w={54}><Folder /></Slot>
            <Slot $w={44}><Firefox /></Slot>
            <Spacer $w={7} />
            <Slot $w={40} $open={ACTIVE} $gap={9}><Teams /></Slot>
            <Slot $w={40} $gap={9}><PanelIcon /></Slot>
            <Slot $w={40} $gap={5}><DbTools /></Slot>
            <Slot $w={48} $bg="#a85f27" $open="#ff7200" $gap={5}><Outlook /></Slot>
            <Slot $w={40} $open={ACTIVE}><IeMark s={23} /></Slot>
            <Tray>
              <Weather />
              <TrayItem $left={8}>38°C</TrayItem>
              <TrayItem $left={9}>Partly sunny</TrayItem>
              <TrayItem $left={24}><Svg w={12} h={7} sw={1.3}><path d="m.5 6.500 5.500-5.500 5.500 5.500" /></Svg></TrayItem>
              <TrayItem $left={10}>
                <Svg w={16} h={14} sw={1.1}><path d="M5 5.500h9.500v6H2v-2M1 2v3h4V2M3 5v3M2 0v2M4 0v2" /><path d="M6 7h7v3H6z" fill="#fff" stroke="none" /><path d="M15.500 7v3" /></Svg>
              </TrayItem>
              <TrayItem $left={8}>
                <Svg w={17} h={14} sw={1.1}><path d="M.5 5v4H3l3.500 3.500v-11L3 5zM9 4.500c1.300 1.500 1.300 3.500 0 5M11.300 2.800c2.200 2.500 2.200 6 0 8.500M13.500 1c3 3.500 3 8.500 0 12" /></Svg>
              </TrayItem>
              <TrayItem $left={10}>
                <Svg w={13} h={13} sw={1.1}><path d="M1 13C1 6 6 1 13 1M4 13c0-5 4-9 9-9M7 13c0-3.300 2.700-6 6-6" /><circle cx="11" cy="11.500" r="1.200" fill="currentColor" /></Svg>
              </TrayItem>
              <TrayItem $left={11} $size={12}>ENG</TrayItem>
              <Clock $left={14} $right={18}>05:48 PM<br />19-04-2023</Clock>
              <Svg w={25} h={25}>
                <path fill="#fff" stroke="none" d="M0 1h16v12H8l-4 4v-4H0z" />
                <path stroke="#333" d="M3 4.500h10M3 7h10M3 9.500h7" />
                <circle cx="15.500" cy="16.500" r="8" fill="#3f3f41" stroke="#aaa" />
                <text x="15.500" y="21" fontSize="12" stroke="none" fill="#fff" textAnchor="middle">5</text>
              </Svg>
              <Spacer $w={11} />
              <PeekEdge />
            </Tray>
          </Taskbar>
        </LeftDesktop>
        <RightDesktop>
          <Odyssey
            width={1920}
            height={1040}
            leftRows={[433, 285.5]}
            rightRows={[292, 151, 309]}
            advice={[...adviceStart, ...specimen, ...adviceEnd, ...adviceRest]}
          />
          <Taskbar $bg={RIGHT_BAR}>
            <Slot $w={48}><WindowsLogo /></Slot>
            <Slot $w={48}><Magnifier /></Slot>
            <Slot $w={48} $gap={7}><TaskView /></Slot>
            <Slot $w={40} $open={ACTIVE} $gap={9}><ChromeMark /></Slot>
            <Slot $w={40} $open={ACTIVE} $gap={9}><Outlook envelope /></Slot>
            <Slot $w={40} $open={ACTIVE} $gap={9}><Folder /></Slot>
            <Slot $w={40} $open={ACTIVE} $gap={9}><Notepad /></Slot>
            <Slot $w={40} $open={ACTIVE} $gap={9}><Excel /></Slot>
            <Slot $w={40} $open={ACTIVE} $gap={9}><DbTools /></Slot>
            <Slot $w={40} $open={ACTIVE} $gap={9}><PanelIcon /></Slot>
            <Slot $w={40} $open={ACTIVE} $gap={5}><TcMark s={25} bg="#fff" /></Slot>
            <Slot $w={48} $open={ACTIVE} $bg="#545456"><RunningApp /></Slot>
            <Tray>
              <Clock $right={6}>05:48 PM<br />19-04-2023</Clock>
            </Tray>
          </Taskbar>
          <Playback>
            <PlaybackBar>
              <TcMark s={32} bg="#f0f0f0" />
              <PlaybackRule />
              <Svg w={16} h={16}><path fill="#00b4ff" stroke="none" d="M0 0h6.500v16H0zM9.500 0H16v16H9.500z" /></Svg>
              <Spacer $w={10} />
              <Svg w={16} h={16}><path fill="#00b4ff" stroke="none" d="M0 0h16v16H0z" /></Svg>
            </PlaybackBar>
            <PlaybackTip>
              <TipPoint><Svg w={8} h={9}><path fill="#fff" stroke="#767676" d="M.5 8.500 7.500.5v8" /></Svg></TipPoint>
              <TipLine>Playback</TipLine>
              <TipLine $ruled>Odyssey</TipLine>
            </PlaybackTip>
          </Playback>
        </RightDesktop>
      </Desktops>
    </>
  );
}
